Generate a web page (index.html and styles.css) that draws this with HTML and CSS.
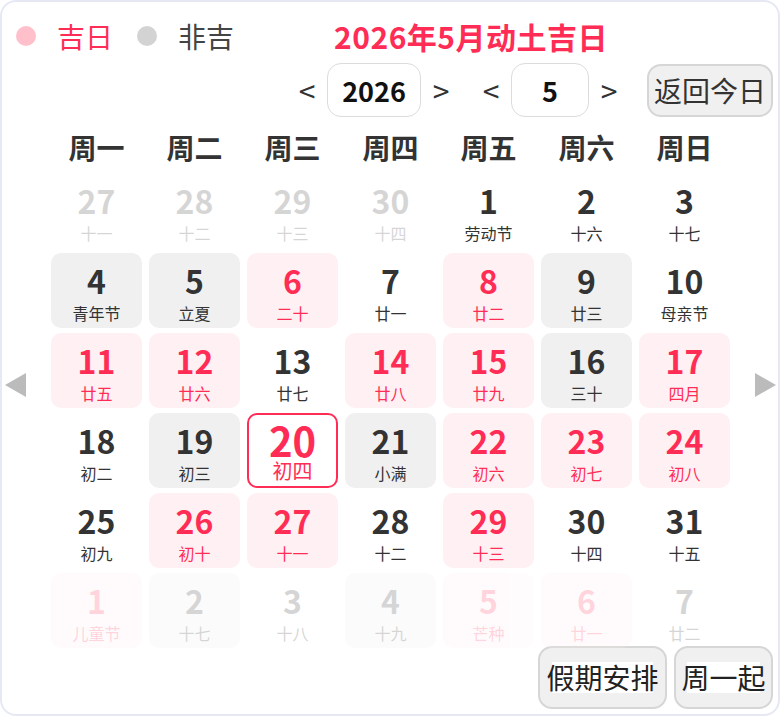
FILE: index.html
```html
<!DOCTYPE html>
<html lang="zh-CN">
<head>
<meta charset="utf-8">
<title>2026年5月动土吉日</title>
<link rel="stylesheet" href="styles.css">
</head>
<body>
<div class="app">
  <div class="top">
    <span class="dot dot-ji"></span><span class="lg lg-ji">吉日</span>
    <span class="dot dot-fei"></span><span class="lg lg-fei">非吉</span>
    <h1 class="title">2026年5月动土吉日</h1>
  </div>
  <div class="controls">
    <span class="arr">&lt;</span><div class="box box-year">2026</div><span class="arr">&gt;</span>
    <span class="arr arr-gap">&lt;</span><div class="box box-month">5</div><span class="arr">&gt;</span>
    <button class="btn btn-today">返回今日</button>
  </div>
  <div class="main">
    <div class="side side-left"><span class="tri tri-left"></span></div>
    <div class="cal">
      <div class="week">
        <div>周一</div><div>周二</div><div>周三</div><div>周四</div><div>周五</div><div>周六</div><div>周日</div>
      </div>
      <div class="grid">
        <div class="cell out"><b>27</b><i>十一</i></div>
        <div class="cell out"><b>28</b><i>十二</i></div>
        <div class="cell out"><b>29</b><i>十三</i></div>
        <div class="cell out"><b>30</b><i>十四</i></div>
        <div class="cell"><b>1</b><i>劳动节</i></div>
        <div class="cell"><b>2</b><i>十六</i></div>
        <div class="cell"><b>3</b><i>十七</i></div>

        <div class="cell gray"><b>4</b><i>青年节</i></div>
        <div class="cell gray"><b>5</b><i>立夏</i></div>
        <div class="cell ji"><b>6</b><i>二十</i></div>
        <div class="cell"><b>7</b><i>廿一</i></div>
        <div class="cell ji"><b>8</b><i>廿二</i></div>
        <div class="cell gray"><b>9</b><i>廿三</i></div>
        <div class="cell"><b>10</b><i>母亲节</i></div>

        <div class="cell ji"><b>11</b><i>廿五</i></div>
        <div class="cell ji"><b>12</b><i>廿六</i></div>
        <div class="cell"><b>13</b><i>廿七</i></div>
        <div class="cell ji"><b>14</b><i>廿八</i></div>
        <div class="cell ji"><b>15</b><i>廿九</i></div>
        <div class="cell gray"><b>16</b><i>三十</i></div>
        <div class="cell ji"><b>17</b><i>四月</i></div>

        <div class="cell"><b>18</b><i>初二</i></div>
        <div class="cell gray"><b>19</b><i>初三</i></div>
        <div class="cell today"><b>20</b><i>初四</i></div>
        <div class="cell gray"><b>21</b><i>小满</i></div>
        <div class="cell ji"><b>22</b><i>初六</i></div>
        <div class="cell ji"><b>23</b><i>初七</i></div>
        <div class="cell ji"><b>24</b><i>初八</i></div>

        <div class="cell"><b>25</b><i>初九</i></div>
        <div class="cell ji"><b>26</b><i>初十</i></div>
        <div class="cell ji"><b>27</b><i>十一</i></div>
        <div class="cell"><b>28</b><i>十二</i></div>
        <div class="cell ji"><b>29</b><i>十三</i></div>
        <div class="cell"><b>30</b><i>十四</i></div>
        <div class="cell"><b>31</b><i>十五</i></div>

        <div class="cell ji out"><b>1</b><i>儿童节</i></div>
        <div class="cell gray out"><b>2</b><i>十七</i></div>
        <div class="cell out"><b>3</b><i>十八</i></div>
        <div class="cell gray out"><b>4</b><i>十九</i></div>
        <div class="cell ji out"><b>5</b><i>芒种</i></div>
        <div class="cell ji out"><b>6</b><i>廿一</i></div>
        <div class="cell out"><b>7</b><i>廿二</i></div>
      </div>
    </div>
    <div class="side side-right"><span class="tri tri-right"></span></div>
  </div>
  <div class="bottom">
    <button class="btn btn-b btn-b1"><span>假期安排</span></button>
    <button class="btn btn-b btn-b2"><span>周一起</span></button>
  </div>
</div>
</body>
</html>
```

FILE: styles.css
```css
* { box-sizing: border-box; }
html, body { margin: 0; padding: 0; background: #fff; }
body {
  font-family: "Noto Sans CJK SC", "Noto Sans", sans-serif;
  color: #333;
}
.app {
  width: 780px;
  height: 716px;
  border: 2px solid #e6e9f4;
  border-radius: 16px;
  padding-top: 14px;
  overflow: hidden;
  background: #fff;
}
.top {
  display: flex;
  align-items: center;
  height: 40px;
  padding-left: 14px;
}
.dot {
  width: 20px;
  height: 20px;
  border-radius: 50%;
  margin-right: 21px;
}
.dot-ji { background: #ffc0cb; }
.dot-fei { background: #d3d3d3; }
.lg { font-size: 28px; line-height: 40px; }
.lg-ji { color: #ff2d55; margin-right: 24px; }
.lg-fei { color: #444; }
.title {
  margin: 0 0 0 100px;
  font-size: 30px;
  letter-spacing: 0.5px;
  line-height: 40px;
  font-weight: 700;
  color: #ff2d55;
}
.controls {
  display: flex;
  align-items: center;
  justify-content: flex-end;
  height: 54px;
  margin-top: 7px;
  padding-right: 5px;
}
.arr {
  width: 40px;
  text-align: center;
  font-size: 30px;
  color: #333;
  line-height: 54px;
}
.arr-gap { margin-left: 10px; }
.box {
  height: 54px;
  border: 1px solid #dcdcdc;
  border-radius: 14px;
  display: flex;
  align-items: center;
  justify-content: center;
  font-size: 27px;
  font-weight: 700;
  color: #111;
}
.box-year { width: 94px; }
.box-month { width: 78px; }
.btn {
  font-family: "Noto Sans CJK SC", "Noto Sans", sans-serif;
  background: #f0f0f0;
  border: 2px solid #d6d6d6;
  border-radius: 14px;
  font-size: 28px;
  color: #333;
  padding: 0;
  display: flex;
  align-items: center;
  justify-content: center;
}
.btn-today {
  width: 126px;
  height: 53px;
  margin-left: 18px;
}
.main {
  display: flex;
  align-items: center;
  margin-top: 5px;
}
.side { display: flex; align-items: center; }
.side-left { width: 49px; padding-left: 3px; }
.side-right { width: 48px; justify-content: flex-end; padding-right: 2px; }
.tri {
  width: 0;
  height: 0;
  border-top: 12px solid transparent;
  border-bottom: 12px solid transparent;
}
.tri-left { border-right: 21px solid #bbb; }
.tri-right { border-left: 21px solid #bbb; }
.cal { width: 679px; }
.week {
  display: grid;
  grid-template-columns: repeat(7, 91px);
  column-gap: 7px;
  height: 50px;
  align-items: center;
  margin-bottom: 1px;
}
.week div {
  text-align: center;
  font-size: 28px;
  font-weight: 700;
  color: #333;
  line-height: 46px;
}
.grid {
  display: grid;
  grid-template-columns: repeat(7, 91px);
  grid-auto-rows: 75px;
  column-gap: 7px;
  row-gap: 5px;
}
.cell {
  border-radius: 10px;
  display: flex;
  flex-direction: column;
  align-items: center;
  padding-top: 9px;
}
.cell b {
  font-size: 32px;
  line-height: 36px;
  font-weight: 700;
  color: #333;
}
.cell i {
  font-style: normal;
  font-size: 16px;
  line-height: 20px;
  margin-top: 5px;
  color: #333;
}
.cell.gray { background: #f0f0f0; }
.cell.ji { background: #fff0f3; }
.cell.ji b, .cell.ji i { color: #ff2d55; }
.cell.out { opacity: 0.2; }
.cell.today {
  border: 2px solid #ff2d55;
  padding-top: 5px;
  background: #fff;
}
.cell.today b { font-size: 40px; line-height: 40px; color: #ff2d55; }
.cell.today i { font-size: 20px; color: #ff2d55; margin-top: 0; line-height: 22px; }
.bottom {
  display: flex;
  justify-content: flex-end;
  gap: 7px;
  margin-top: -2px;
  padding-right: 5px;
}
.btn-b { height: 63px; color: #222; }
.btn-b1 { width: 129px; }
.btn-b2 { width: 99px; }
.btn-b span {
  line-height: 31px;
  background: linear-gradient(#fff, #fff) no-repeat center / calc(100% - 12px) 31px;
}
```
